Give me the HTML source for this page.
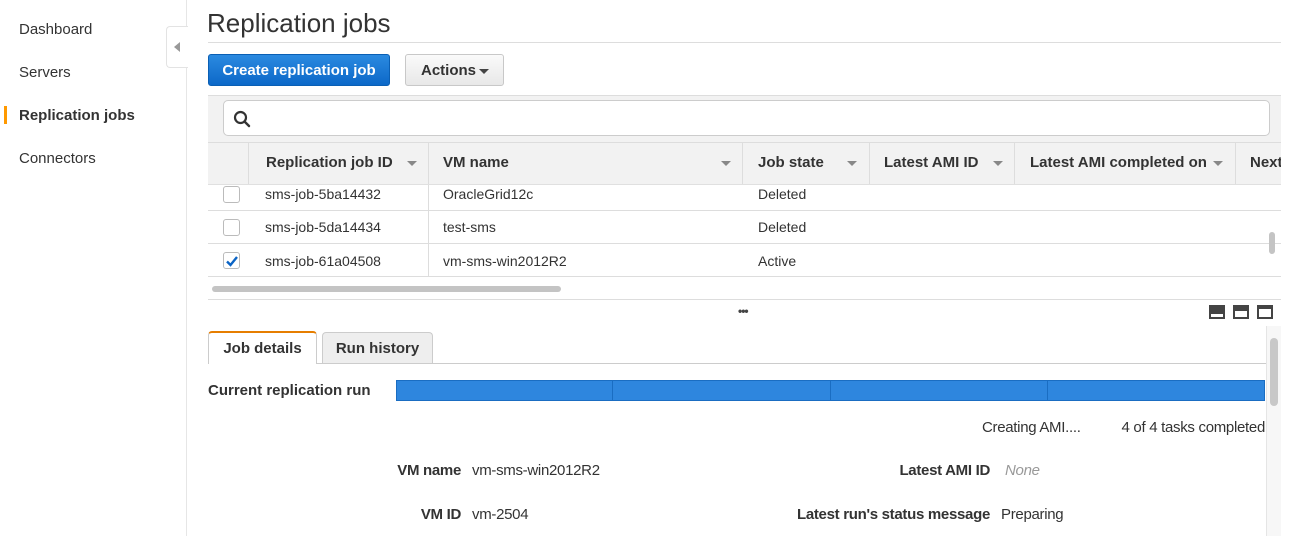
<!DOCTYPE html>
<html><head><style>
*{margin:0;padding:0;box-sizing:border-box}
body{width:1295px;height:536px;overflow:hidden;background:#fff;font-family:"Liberation Sans",Arial,sans-serif;color:#333;position:relative}
.a{position:absolute;white-space:nowrap}
.nav{font-size:15px;color:#333}
.th{font-size:15px;font-weight:bold;color:#333;top:154px}
.td{font-size:14px;color:#333}
.car{position:absolute;width:0;height:0;border-left:5px solid transparent;border-right:5px solid transparent;border-top:5px solid #888}
.cb{position:absolute;left:223px;width:17px;height:17px;border:1px solid #bbb;border-radius:3px;background:#fff}
.hl{position:absolute;height:1px;background:#ddd}
.vl{position:absolute;width:1px;background:#ddd}
.c{font-size:15px;letter-spacing:-0.3px}
</style></head><body>
<div class="a" style="left:186px;top:0;width:1px;height:536px;background:#e6e6e6"></div>
<div class="a nav" style="left:19px;top:21px">Dashboard</div>
<div class="a nav" style="left:19px;top:64px">Servers</div>
<div class="a" style="left:4px;top:106px;width:3px;height:18px;background:#f90"></div>
<div class="a nav" style="left:19px;top:107px;font-weight:bold">Replication jobs</div>
<div class="a nav" style="left:19px;top:150px">Connectors</div>
<div class="a" style="left:166px;top:26px;width:22px;height:42px;border:1px solid #e3e3e3;border-right:none;border-radius:4px 0 0 4px;background:#fff"></div>
<div class="a" style="left:174px;top:42px;border-top:5px solid transparent;border-bottom:5px solid transparent;border-right:6px solid #999"></div>

<div class="a" style="left:207px;top:8px;font-size:26px;color:#333">Replication jobs</div>
<div class="hl" style="left:208px;top:42px;width:1073px;background:#ddd"></div>
<div class="a" style="left:208px;top:54px;width:182px;height:32px;background:linear-gradient(#2b8ae0,#0c68c8);border:1px solid #0a5fb4;border-radius:3px;color:#fff;font-weight:bold;font-size:15px;text-align:center;line-height:31px">Create replication job</div>
<div class="a" style="left:405px;top:54px;width:99px;height:32px;background:linear-gradient(#fafafa,#e8e8e8);border:1px solid #c8c8c8;border-radius:3px;font-weight:bold;font-size:15px;line-height:31px;padding-left:15px;color:#333">Actions</div>
<div class="car" style="left:479px;top:69px;border-top-color:#444"></div>

<div class="a" style="left:208px;top:95px;width:1073px;height:89px;background:#f2f2f2;border-top:1px solid #ddd"></div>
<div class="a" style="left:223px;top:100px;width:1047px;height:36px;background:#fff;border:1px solid #ccc;border-radius:5px"></div>
<svg class="a" style="left:233px;top:110px" width="18" height="18" viewBox="0 0 18 18"><circle cx="7.5" cy="7.5" r="5.5" fill="none" stroke="#333" stroke-width="2.2"/><path d="M11.5 11.5L16 16" stroke="#333" stroke-width="2.4" stroke-linecap="round"/></svg>
<div class="hl" style="left:208px;top:142px;width:1073px;background:#ddd"></div>
<div class="vl" style="left:248px;top:143px;height:41px"></div>
<div class="vl" style="left:428px;top:143px;height:134px"></div>
<div class="vl" style="left:742px;top:143px;height:41px"></div>
<div class="vl" style="left:869px;top:143px;height:41px"></div>
<div class="vl" style="left:1014px;top:143px;height:41px"></div>
<div class="vl" style="left:1235px;top:143px;height:41px"></div>
<div class="a th" style="left:266px">Replication job ID</div><div class="car" style="left:407px;top:161px"></div>
<div class="a th" style="left:443px">VM name</div><div class="car" style="left:721px;top:161px"></div>
<div class="a th" style="left:758px">Job state</div><div class="car" style="left:847px;top:161px"></div>
<div class="a th" style="left:884px">Latest AMI ID</div><div class="car" style="left:993px;top:161px"></div>
<div class="a th" style="left:1030px">Latest AMI completed on</div><div class="car" style="left:1213px;top:161px"></div>
<div class="a th" style="left:1250px;width:31px;overflow:hidden">Next</div>
<div class="hl" style="left:208px;top:184px;width:1073px;background:#e0e0e0"></div>

<div class="cb" style="top:186px"></div>
<div class="a td" style="left:265px;top:186px">sms-job-5ba14432</div>
<div class="a td" style="left:443px;top:186px">OracleGrid12c</div>
<div class="a td" style="left:758px;top:186px">Deleted</div>
<div class="hl" style="left:208px;top:210px;width:1073px"></div>
<div class="cb" style="top:219px"></div>
<div class="a td" style="left:265px;top:219px">sms-job-5da14434</div>
<div class="a td" style="left:443px;top:219px">test-sms</div>
<div class="a td" style="left:758px;top:219px">Deleted</div>
<div class="hl" style="left:208px;top:243px;width:1073px"></div>
<div class="cb" style="top:252px"></div>
<svg class="a" style="left:225px;top:254px" width="14" height="14"><path d="M2 7.5L5.5 11L12 3" fill="none" stroke="#0b64c5" stroke-width="2.4"/></svg>
<div class="a td" style="left:265px;top:253px">sms-job-61a04508</div>
<div class="a td" style="left:443px;top:253px">vm-sms-win2012R2</div>
<div class="a td" style="left:758px;top:253px">Active</div>
<div class="hl" style="left:208px;top:276px;width:1073px"></div>
<div class="a" style="left:1269px;top:232px;width:6px;height:22px;background:#c4c4c4;border-radius:3px"></div>
<div class="a" style="left:212px;top:286px;width:349px;height:6px;background:#c4c4c4;border-radius:3px"></div>
<div class="hl" style="left:208px;top:299px;width:1073px;background:#ddd"></div>
<div class="a" style="left:738px;top:304px;font-size:12px;font-weight:bold;color:#444;letter-spacing:-1px">•••</div>
<div class="a" style="left:1209px;top:305px;width:16px;height:14px;background:#444"></div><div class="a" style="left:1211px;top:314px;width:12px;height:3px;background:#fff"></div>
<div class="a" style="left:1233px;top:305px;width:16px;height:14px;background:#444"></div><div class="a" style="left:1235px;top:311px;width:12px;height:6px;background:#fff"></div>
<div class="a" style="left:1257px;top:305px;width:16px;height:14px;background:#444"></div><div class="a" style="left:1259px;top:309px;width:12px;height:8px;background:#fff"></div>
<div class="a" style="left:1266px;top:326px;width:15px;height:210px;background:#f7f7f7;border-left:1px solid #e5e5e5"></div>
<div class="a" style="left:1270px;top:338px;width:8px;height:68px;background:#c8c8c8;border-radius:4px"></div>

<div class="hl" style="left:208px;top:363px;width:1058px;background:#ccc"></div>
<div class="a" style="left:208px;top:331px;width:109px;height:33px;background:#fff;border:1px solid #ccc;border-top:2px solid #e67e00;border-bottom:none;border-radius:4px 4px 0 0;font-weight:bold;font-size:15px;text-align:center;line-height:32px">Job details</div>
<div class="a" style="left:322px;top:332px;width:111px;height:31px;background:#eee;border:1px solid #ccc;border-bottom:none;border-radius:4px 4px 0 0;font-weight:bold;font-size:15px;text-align:center;line-height:31px">Run history</div>
<div class="a" style="left:208px;top:382px;font-weight:bold;font-size:15px">Current replication run</div>
<div class="a" style="left:396px;top:380px;width:869px;height:21px;background:#2e86de;border:1px solid #1a6dc2"></div>
<div class="vl" style="left:612px;top:381px;height:19px;background:#1a6dc2"></div>
<div class="vl" style="left:830px;top:381px;height:19px;background:#1a6dc2"></div>
<div class="vl" style="left:1047px;top:381px;height:19px;background:#1a6dc2"></div>
<div class="a c" style="left:982px;top:419px">Creating AMI....</div>
<div class="a c" style="right:30px;top:419px">4 of 4 tasks completed</div>
<div class="a c" style="right:834px;top:462px;font-weight:bold">VM name</div>
<div class="a c" style="left:472px;top:462px">vm-sms-win2012R2</div>
<div class="a c" style="right:305px;top:462px;font-weight:bold">Latest AMI ID</div>
<div class="a c" style="left:1005px;top:462px;color:#999;font-style:italic">None</div>
<div class="a c" style="right:834px;top:506px;font-weight:bold">VM ID</div>
<div class="a c" style="left:472px;top:506px">vm-2504</div>
<div class="a c" style="right:305px;top:506px;font-weight:bold">Latest run's status message</div>
<div class="a c" style="left:1001px;top:506px">Preparing</div>
</body></html>
